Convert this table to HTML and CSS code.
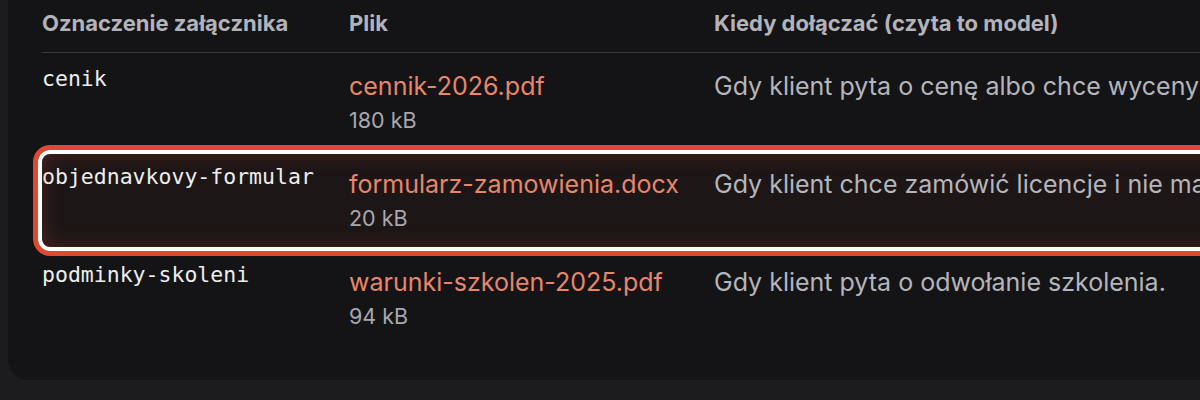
FILE: index.html
```html
<!DOCTYPE html>
<html>
<head>
    <meta charset="utf-8">
    <link rel="stylesheet" href="styles.css">
</head>
<body>
    <div class="card">
        <div class="row head">
            <div class="cell">Oznaczenie załącznika</div>
            <div class="cell">Plik</div>
            <div class="cell">Kiedy dołączać (czyta to model)</div>
        </div>

        <div class="row">
            <div class="cell key">cenik</div>
            <div class="cell file">
                <div class="name">cennik-2026.pdf</div>
                <div class="size">180 kB</div>
            </div>
            <div class="cell when">Gdy klient pyta o cenę albo chce wyceny szkolenia lub licencji.</div>
        </div>

        <div class="row selected">
            <div class="cell key">objednavkovy-formular</div>
            <div class="cell file">
                <div class="name">formularz-zamowienia.docx</div>
                <div class="size">20 kB</div>
            </div>
            <div class="cell when">Gdy klient chce zamówić licencje i nie ma jeszcze formularza.</div>
        </div>

        <div class="row">
            <div class="cell key">podminky-skoleni</div>
            <div class="cell file">
                <div class="name">warunki-szkolen-2025.pdf</div>
                <div class="size">94 kB</div>
            </div>
            <div class="cell when">Gdy klient pyta o odwołanie szkolenia.</div>
        </div>
    </div>
</body>
</html>
```

FILE: styles.css
```css
body {
    margin: 0;
    background: #1c1c1f;
    font-family: Inter, "Noto Sans", sans-serif;
    overflow: hidden;
}
.card {
    width: 1400px;
    margin: -20px 0 0 8px;
    padding: 20px 34px 33px 34px;
    background: #141416;
    border-radius: 20px;
}
.row {
    display: grid;
    grid-template-columns: 307px 365px 1fr;
    padding: 14px 0 17px 0;
    position: relative;
}
.row.head {
    padding: 11px 0 17px 0;
    border-bottom: 1px solid #38383d;
    font-size: 22px;
    font-weight: 700;
    line-height: 24px;
    color: #b3b3ba;
}
.key {
    font-family: "DejaVu Sans Mono", monospace;
    font-size: 21.5px;
    line-height: 24px;
    color: #eeeeee;
}
.file {
    padding-top: 2px;
}
.name {
    font-size: 25px;
    line-height: 34px;
    color: #e7866b;
}
.size {
    margin-top: 3px;
    font-size: 21.5px;
    line-height: 28px;
    color: #a7a7af;
}
.when {
    padding-top: 2px;
    font-size: 25px;
    line-height: 34px;
    color: #b5b5bc;
    white-space: nowrap;
}
.selected {
    background: rgba(224, 74, 47, 0.04);
}
.selected::after {
    content: "";
    position: absolute;
    top: -1px;
    bottom: -2px;
    left: -4px;
    right: -40px;
    border: 4px solid #ffffff;
    border-radius: 12px;
    box-shadow: 0 0 0 5px #e1482d, inset 0 0 20px rgba(224, 74, 47, 0.26);
}
```
